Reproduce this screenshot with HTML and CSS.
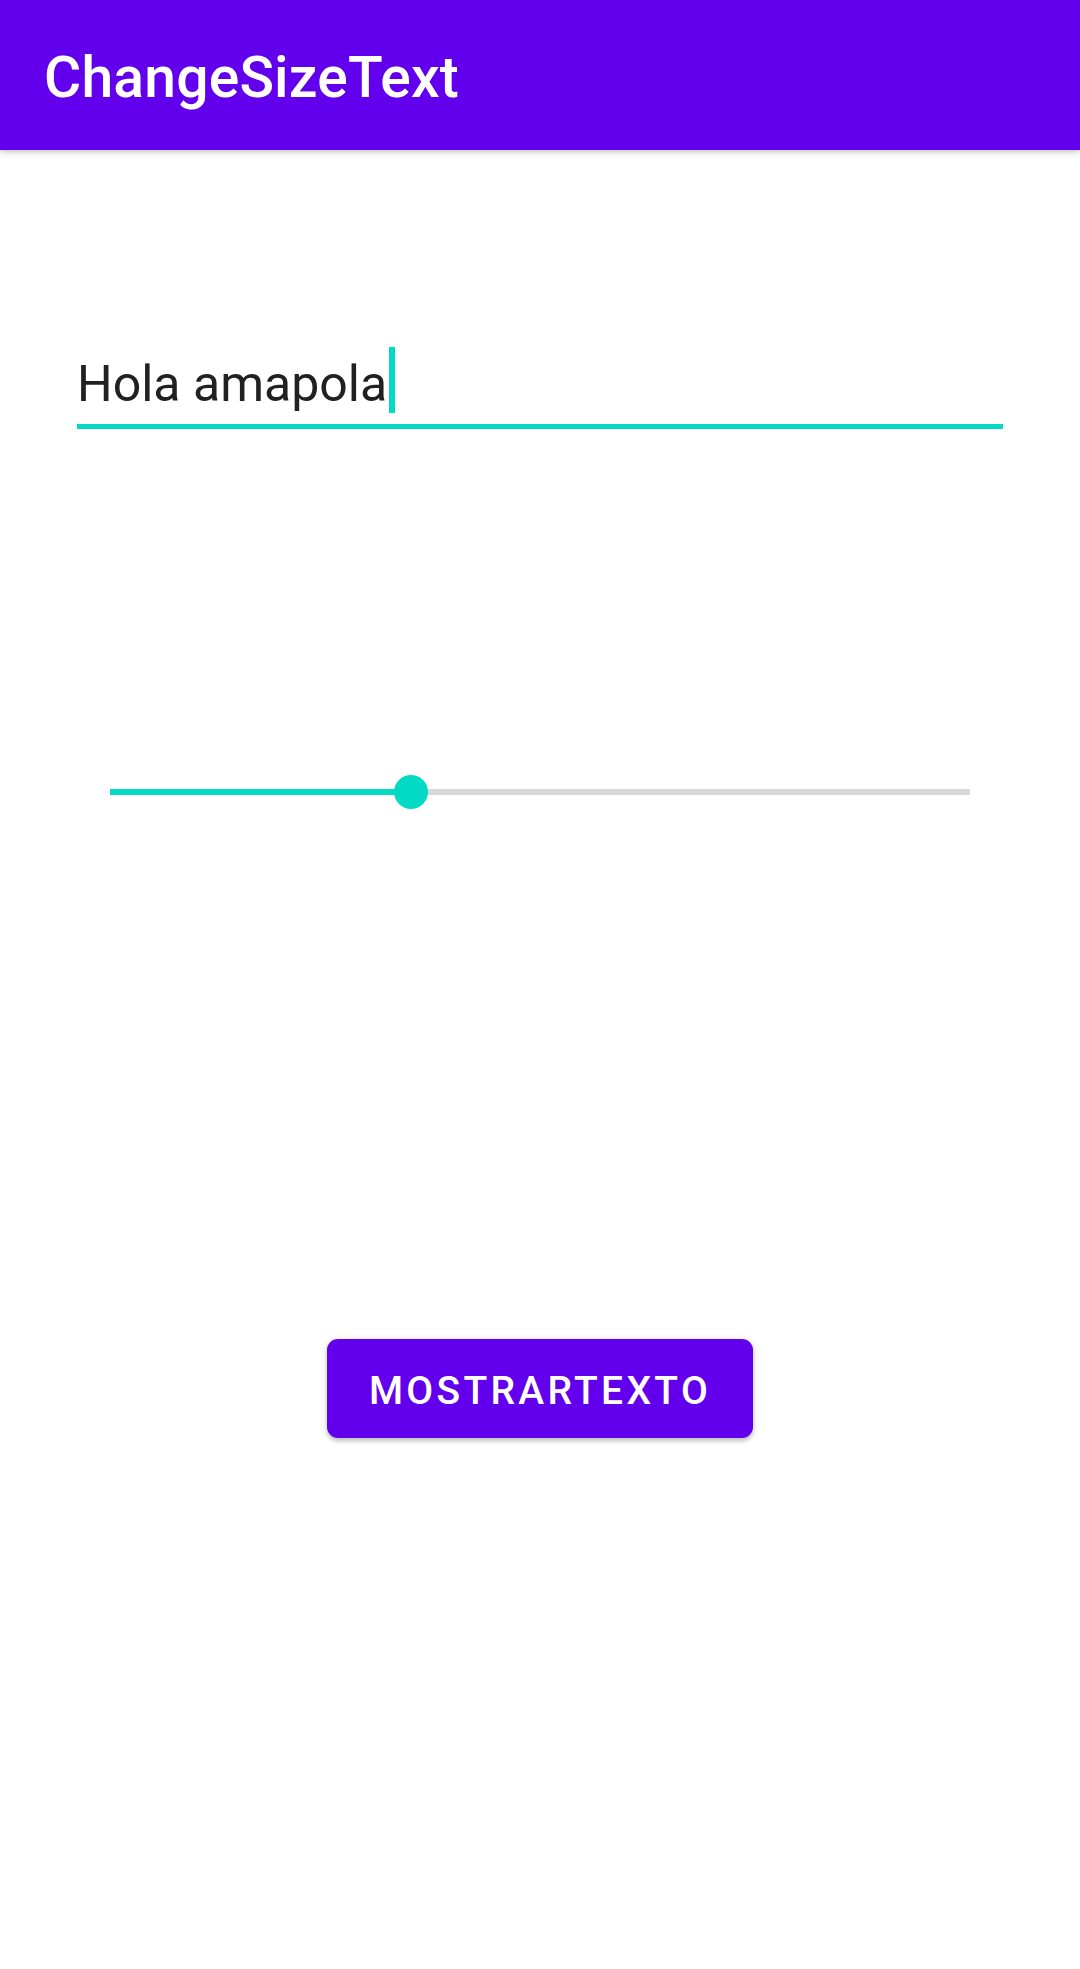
FILE: index.html
```html
<!DOCTYPE html>
<html lang="es">
<head>
<meta charset="utf-8">
<title>ChangeSizeText</title>
<link rel="stylesheet" href="styles.css">
</head>
<body>
<header class="appbar">
  <h1 class="appbar-title">ChangeSizeText</h1>
</header>
<main class="content">
  <div class="field">
    <span class="field-text">Hola amapola</span><span class="caret"></span>
  </div>
  <div class="slider">
    <div class="track">
      <div class="track-fill" style="width: 35%"></div>
      <div class="thumb" style="left: 35%"></div>
    </div>
  </div>
  <div class="button-row">
    <button class="btn">MOSTRARTEXTO</button>
  </div>
</main>
</body>
</html>
```
FILE: styles.css
```css
html, body {
  margin: 0;
  padding: 0;
  background: #ffffff;
}
body {
  width: 1080px;
  height: 1969px;
  font-family: Roboto, "Noto Sans", sans-serif;
  overflow: hidden;
}
.appbar {
  box-sizing: border-box;
  height: 150px;
  padding: 4px 44px 0;
  background: #6200ee;
  display: flex;
  align-items: center;
  box-shadow: 0 3px 6px rgba(0, 0, 0, 0.16), 0 1px 3px rgba(0, 0, 0, 0.08);
  position: relative;
  z-index: 1;
}
.appbar-title {
  margin: 0;
  font-size: 57px;
  font-weight: 500;
  color: #ffffff;
  letter-spacing: 0.2px;
}
.content {
  display: flex;
  flex-direction: column;
}
.field {
  margin: 197px 77px 0;
  padding-bottom: 3px;
  border-bottom: 5px solid #03dac5;
  display: flex;
  align-items: flex-start;
}
.field-text {
  font-size: 50px;
  line-height: 74px;
  color: #212121;
}
.caret {
  width: 6px;
  height: 66px;
  margin-left: 2px;
  background: #03dac5;
}
.slider {
  margin: 346px 110px 0;
  height: 34px;
  display: flex;
  align-items: center;
}
.track {
  position: relative;
  width: 100%;
  height: 6px;
  background: #d9d9d9;
}
.track-fill {
  height: 100%;
  background: #03dac5;
}
.thumb {
  position: absolute;
  top: 50%;
  width: 34px;
  height: 34px;
  margin: -17px 0 0 -17px;
  border-radius: 50%;
  background: #03dac5;
}
.button-row {
  margin-top: 530px;
  display: flex;
  justify-content: center;
}
.btn {
  box-sizing: border-box;
  width: 426px;
  height: 99px;
  border: none;
  border-radius: 11px;
  background: #6200ee;
  color: #ffffff;
  font-family: Roboto, "Noto Sans", sans-serif;
  font-size: 39px;
  font-weight: 500;
  letter-spacing: 3.3px;
  padding: 4px 0 0;
  box-shadow: 0 3px 4px rgba(0, 0, 0, 0.2), 0 1px 8px rgba(0, 0, 0, 0.1);
}
```
